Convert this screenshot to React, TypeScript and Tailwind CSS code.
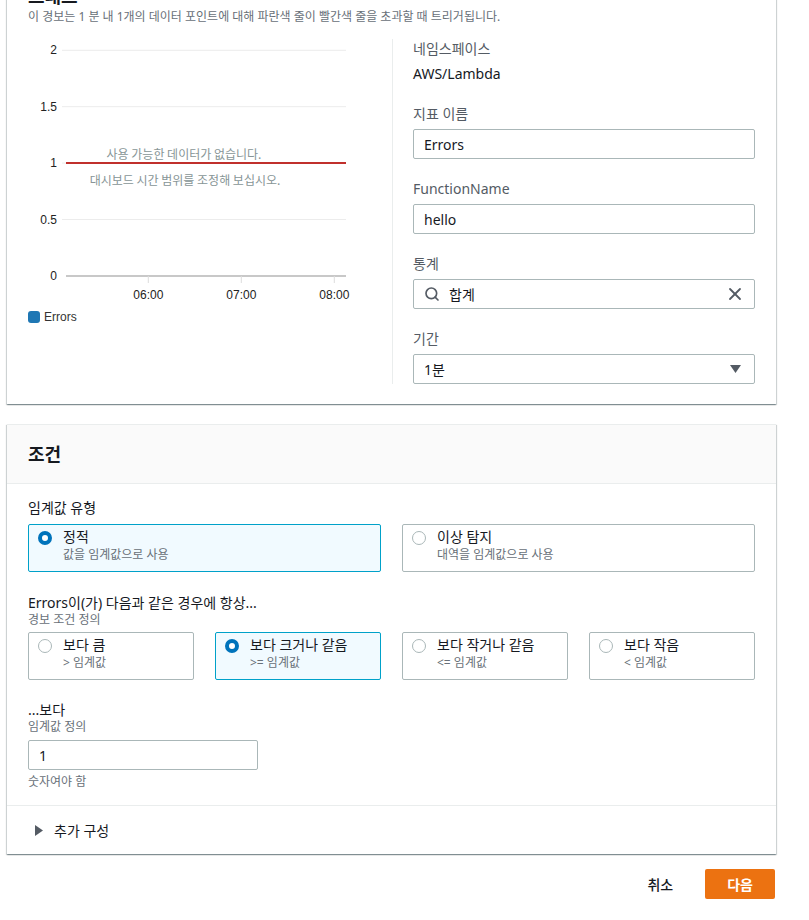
import { Search, X } from 'lucide-react';

const font = { fontFamily: '"Noto Sans", "Noto Sans CJK KR", sans-serif' };

function Radio({ checked }: { checked: boolean }) {
  return checked ? (
    <span className="w-[14px] h-[14px] rounded-full border-[4px] border-[#0073bb] bg-white shrink-0" />
  ) : (
    <span className="w-[14px] h-[14px] rounded-full border border-[#aab7b8] bg-white shrink-0" />
  );
}

function Tile({ title, desc, checked }: { title: string; desc: string; checked: boolean }) {
  return (
    <div
      className={`h-[48px] border rounded-[2px] pl-[9px] pr-3 pt-[2px] flex items-start gap-[11px] ${
        checked ? 'border-[#00a1c9] bg-[#f1faff]' : 'border-[#aab7b8] bg-white'
      }`}
    >
      <div className="h-[20px] flex items-center mt-[1px]">
        <Radio checked={checked} />
      </div>
      <div>
        <div className="text-[14px] leading-[20px] text-[#16191f]">{title}</div>
        <div className="text-[12px] leading-[16px] text-[#687078]">{desc}</div>
      </div>
    </div>
  );
}

function Chart() {
  const grid = [
    { y: 11.3, label: '2' },
    { y: 67.7, label: '1.5' },
    { y: 124.1, label: '1' },
    { y: 180.5, label: '0.5' },
  ];
  const ticks = [
    { x: 120.3, label: '06:00' },
    { x: 213.3, label: '07:00' },
    { x: 306.3, label: '08:00' },
  ];
  return (
    <svg width="344" height="262" className="block">
      {grid.map(g => (
        <g key={g.label}>
          <line x1="34" x2="318" y1={g.y} y2={g.y} stroke="#ececec" strokeWidth="1" />
          <text x="29" y={g.y + 4} textAnchor="end" fontSize="12" fill="#222" fontFamily="Liberation Sans, Arial, sans-serif">
            {g.label}
          </text>
        </g>
      ))}
      <text x="29" y="240.9" textAnchor="end" fontSize="12" fill="#222" fontFamily="Liberation Sans, Arial, sans-serif">0</text>
      <line x1="38" x2="318" y1="236.9" y2="236.9" stroke="#c8c8c8" strokeWidth="2" />
      {ticks.map(t => (
        <g key={t.label}>
          <line x1={t.x} x2={t.x} y1="237" y2="244" stroke="#dcdcdc" strokeWidth="1" />
          <text x={t.x} y="259.5" textAnchor="middle" fontSize="12" fill="#222" fontFamily="Liberation Sans, Arial, sans-serif">
            {t.label}
          </text>
        </g>
      ))}
      <line x1="38" x2="318" y1="124.1" y2="124.1" stroke="#c0302c" strokeWidth="2" />
      <text x="156" y="119.5" textAnchor="middle" fontSize="12" fill="#879596" fontFamily='"Noto Sans CJK KR", sans-serif'>
        사용 가능한 데이터가 없습니다.
      </text>
      <text x="157" y="145.5" textAnchor="middle" fontSize="12" fill="#879596" fontFamily='"Noto Sans CJK KR", sans-serif'>
        대시보드 시간 범위를 조정해 보십시오.
      </text>
    </svg>
  );
}

function Field({ label, children }: { label: string; children: React.ReactNode }) {
  return (
    <div className="mt-[20px]">
      <div className="text-[14px] leading-[20px] text-[#545b64] mb-[5px]">{label}</div>
      {children}
    </div>
  );
}

const inputCls = 'h-[30px] border border-[#aab7b8] rounded-[2px] bg-white flex items-center text-[14px] text-[#16191f]';
const cardShadow =
  'bg-white border-t border-[#eaeded] shadow-[0_1px_1px_0_rgba(0,28,36,0.3),1px_1px_1px_0_rgba(0,28,36,0.15),-1px_1px_1px_0_rgba(0,28,36,0.15)]';

export default function App() {
  return (
    <div className="w-[809px] min-h-[920px] bg-white overflow-hidden" style={font}>
      <div className="-mt-[34px] ml-[7px] w-[769px]">
        {/* graph card */}
        <div className={`${cardShadow} pl-[21px] pr-[21px] pt-[18px] pb-[20px]`}>
          <h2 className="text-[18px] leading-[22px] font-bold text-[#16191f] mb-[2px]">그래프</h2>
          <p className="text-[12px] leading-[16px] text-[#687078]">
            이 경보는 1 분 내 1개의 데이터 포인트에 대해 파란색 줄이 빨간색 줄을 초과할 때 트리거됩니다.
          </p>
          <div className="flex mt-[14px]">
            <div className="w-[364px]">
              <Chart />
              <div className="flex items-center gap-[4px] mt-[8px] h-[16px]">
                <span className="w-[12px] h-[12px] rounded-[3px] bg-[#1f77b4]" />
                <span className="text-[12px] text-[#333]" style={{ fontFamily: '"Liberation Sans", Arial, sans-serif' }}>
                  Errors
                </span>
              </div>
            </div>
            <div className="flex-1 border-l border-[#eaeded] pl-[20px]">
              <div className="text-[14px] leading-[20px] text-[#545b64]">네임스페이스</div>
              <div className="text-[14px] leading-[20px] text-[#16191f] mt-[5px]">AWS/Lambda</div>
              <Field label="지표 이름">
                <div className={`${inputCls} pl-[10px]`}>Errors</div>
              </Field>
              <Field label="FunctionName">
                <div className={`${inputCls} pl-[10px]`}>hello</div>
              </Field>
              <Field label="통계">
                <div className={`${inputCls} pl-[10px] pr-[9px] gap-[9px]`}>
                  <Search size={16} strokeWidth={2.5} color="#545b64" />
                  <span className="flex-1">합계</span>
                  <X size={20} strokeWidth={2.2} color="#545b64" />
                </div>
              </Field>
              <Field label="기간">
                <div className={`${inputCls} pl-[10px] pr-[13px] justify-between`}>
                  <span>1분</span>
                  <svg width="11" height="8" viewBox="0 0 11 8">
                    <path d="M0 0 L11 0 L5.5 8 Z" fill="#545b64" />
                  </svg>
                </div>
              </Field>
            </div>
          </div>
        </div>

        {/* conditions card */}
        <div className={`${cardShadow} mt-[20px]`}>
          <div className="h-[59px] bg-[#fafafa] border-b border-[#eaeded] flex items-center pl-[21px]">
            <h2 className="text-[18px] font-bold text-[#16191f]">조건</h2>
          </div>
          <div className="pl-[21px] pr-[21px] pt-[14px] pb-[15px]">
            <div className="text-[14px] leading-[20px] text-[#16191f]">임계값 유형</div>
            <div className="grid grid-cols-2 gap-[21px] mt-[6px]">
              <Tile title="정적" desc="값을 임계값으로 사용" checked />
              <Tile title="이상 탐지" desc="대역을 임계값으로 사용" checked={false} />
            </div>

            <div className="text-[14px] leading-[18px] text-[#16191f] mt-[22px]">Errors이(가) 다음과 같은 경우에 항상...</div>
            <div className="text-[12px] leading-[16px] text-[#687078]">경보 조건 정의</div>
            <div className="grid grid-cols-4 gap-[21px] mt-[4px]">
              <Tile title="보다 큼" desc="> 임계값" checked={false} />
              <Tile title="보다 크거나 같음" desc=">= 임계값" checked />
              <Tile title="보다 작거나 같음" desc="<= 임계값" checked={false} />
              <Tile title="보다 작음" desc="< 임계값" checked={false} />
            </div>

            <div className="text-[14px] leading-[18px] text-[#16191f] mt-[21px]">...보다</div>
            <div className="text-[12px] leading-[16px] text-[#687078]">임계값 정의</div>
            <div className={`${inputCls} w-[230px] pl-[10px] mt-[5px]`}>1</div>
            <div className="text-[12px] leading-[16px] text-[#687078] mt-[4px]">숫자여야 함</div>
          </div>
          <div className="border-t border-[#eaeded] h-[49px] flex items-center pl-[28px] gap-[11px]">
            <svg width="8" height="11" viewBox="0 0 8 11">
              <path d="M0 0 L8 5.5 L0 11 Z" fill="#545b64" />
            </svg>
            <span className="text-[14px] text-[#16191f]">추가 구성</span>
          </div>
        </div>

        {/* footer */}
        <div className="flex justify-end items-center mt-[15px] gap-[32px]">
          <button className="text-[14px] font-medium text-[#16191f]">취소</button>
          <button className="h-[30px] px-[22px] rounded-[2px] bg-[#ec7211] text-white text-[14px] font-bold mr-[1px]">다음</button>
        </div>
      </div>
    </div>
  );
}
